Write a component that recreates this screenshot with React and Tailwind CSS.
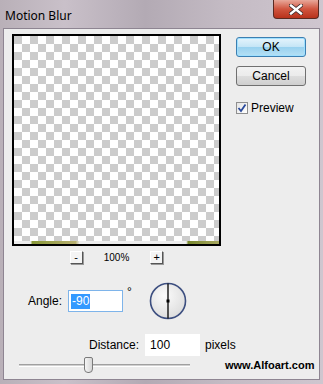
const Checker = () => (
  <div className="w-full h-full flex flex-col">
    <div
      className="flex-1"
      style={{
        backgroundImage: "conic-gradient(#ffffff 25%, #cccccc 0 50%, #ffffff 0 75%, #cccccc 0)",
        backgroundSize: "16px 16px",
      }}
    />
    <div className="h-[3px] bg-[linear-gradient(90deg,transparent_0%,transparent_8%,#8a9a3a_9%,#b8b070_30%,transparent_32%,transparent_84%,#7a8a30_85%,#a8a860_100%)]" />
  </div>
);

const SmallBtn = ({ children }) => (
  <div className="w-[13px] h-[13px] flex items-center justify-center bg-[#f4f4f4] border-r border-b border-[#555] border-l border-t border-l-white border-t-white shadow-[1px_1px_0_#999] text-[11px] leading-none text-black">
    {children}
  </div>
);

const App = () => {
  return (
    <div
      className="w-[323px] h-[384px] flex flex-col overflow-hidden"
      style={{ fontFamily: '"Liberation Sans", Arial, sans-serif' }}
    >
      <div className="w-full h-full flex flex-col bg-[linear-gradient(90deg,#b9b0b8_0%,#c9c0c9_20%,#b3aab4_45%,#c4bbc4_70%,#cfc6cf_100%)]">
        {/* Title bar */}
        <div className="h-[28px] flex justify-between items-start shrink-0">
          <div className="pl-[5px] pt-[7px] text-[12px] text-black" style={{ fontFamily: '"Noto Sans", "Liberation Sans", sans-serif' }}>
            Motion Blur
          </div>
          <div className="mr-[4px] w-[46px] h-[19px] rounded-b-[4px] border border-[#5a2a22] border-t-0 bg-[linear-gradient(180deg,#e8a89a_0%,#d0553f_50%,#b8321c_100%)] flex items-center justify-center">
            <svg width="14" height="11" viewBox="0 0 14 11">
              <path d="M2 1.5 L12 9.5 M12 1.5 L2 9.5" stroke="#3a2a2a" strokeWidth="4" strokeLinecap="square" />
              <path d="M2 1.5 L12 9.5 M12 1.5 L2 9.5" stroke="#ffffff" strokeWidth="2.4" strokeLinecap="square" />
            </svg>
          </div>
        </div>

        {/* Client area */}
        <div className="mx-[3px] mb-[4px] flex-1 bg-[#ededed] border border-[#8e8592] flex flex-col">
          <div className="flex pt-[5px] pl-[8px]">
            <div className="flex flex-col items-center">
              <div className="w-[209px] h-[212px] border-2 border-black">
                <Checker />
              </div>
              <div className="flex items-center mt-[4px] gap-[21px]">
                <SmallBtn>-</SmallBtn>
                <span className="text-[10px] text-black">100%</span>
                <SmallBtn>+</SmallBtn>
              </div>
            </div>
            <div className="flex flex-col ml-[15px] pt-[3px] text-[12px]">
              <div className="w-[70px] h-[20px] rounded-[3px] border border-[#3c7fb1] bg-[linear-gradient(180deg,#e5f4fc_0%,#c4e5f6_50%,#98d1ef_51%,#b6e0f4_100%)] shadow-[inset_0_0_0_1px_#9fe0ff] flex items-center justify-center text-black">
                OK
              </div>
              <div className="w-[70px] h-[20px] mt-[9px] rounded-[3px] border border-[#707070] bg-[linear-gradient(180deg,#f2f2f2_0%,#ebebeb_50%,#dddddd_51%,#cfcfcf_100%)] flex items-center justify-center text-black">
                Cancel
              </div>
              <div className="flex items-center mt-[13px] gap-[3px]">
                <div className="w-[12px] h-[12px] border border-[#8f8f8f] bg-[linear-gradient(135deg,#e4e4e4,#ffffff)] flex items-center justify-center">
                  <svg width="10" height="10" viewBox="0 0 10 10">
                    <path d="M1.5 5 L4 8 L8.5 1.5" fill="none" stroke="#2a4a9c" strokeWidth="1.8" />
                  </svg>
                </div>
                <span className="text-black">Preview</span>
              </div>
            </div>
          </div>

          {/* Angle */}
          <div className="flex items-center mt-[17px] pl-[24px]">
            <span className="text-[12px] text-black w-[40px]">Angle:</span>
            <div className="w-[55px] h-[22px] bg-white border border-[#7eb4ea] flex items-center px-[2px]">
              <span className="bg-[#3399ff] text-white text-[12px] leading-[15px] px-[1px]">-90</span>
            </div>
            <span className="text-[12px] text-black self-start mt-[1px] ml-[4px]">°</span>
            <svg width="38" height="38" viewBox="0 0 38 38" className="ml-[17px]">
              <defs>
                <radialGradient id="dial" cx="0.4" cy="0.35" r="0.7">
                  <stop offset="0" stopColor="#fbfbfb" />
                  <stop offset="1" stopColor="#dcdcdc" />
                </radialGradient>
              </defs>
              <circle cx="19" cy="19" r="17.5" fill="url(#dial)" stroke="#3d4f80" strokeWidth="1.6" />
              <line x1="19" y1="1.5" x2="19" y2="36.5" stroke="#000" strokeWidth="1.3" />
              <rect x="17.5" y="17.5" width="3" height="3" fill="#000" />
            </svg>
          </div>

          {/* Distance */}
          <div className="flex items-center mt-[14px] pl-[85px] text-[12px] text-black">
            <span>Distance:</span>
            <div className="w-[55px] h-[22px] bg-white ml-[6px] flex items-center px-[5px]">100</div>
            <span className="ml-[5px]">pixels</span>
          </div>

          {/* Slider + credit */}
          <div className="flex items-center mt-[1px] pl-[15px]">
            <div className="relative w-[171px] h-[17px] flex items-center">
              <div className="w-full h-[3px] border-t border-[#a0a0a0] border-b border-b-white bg-[#d0d0d0]" />
              <div className="absolute left-[65px] top-0 w-[9px] h-[16px] rounded-t-[2px] rounded-b-[4px] border border-[#7a7a7a] bg-[linear-gradient(90deg,#f5f5f5,#d6d6d6)]" />
            </div>
            <span className="ml-[35px] text-[11px] font-bold text-black">www.Alfoart.com</span>
          </div>
        </div>
      </div>
    </div>
  );
};

export default App;
